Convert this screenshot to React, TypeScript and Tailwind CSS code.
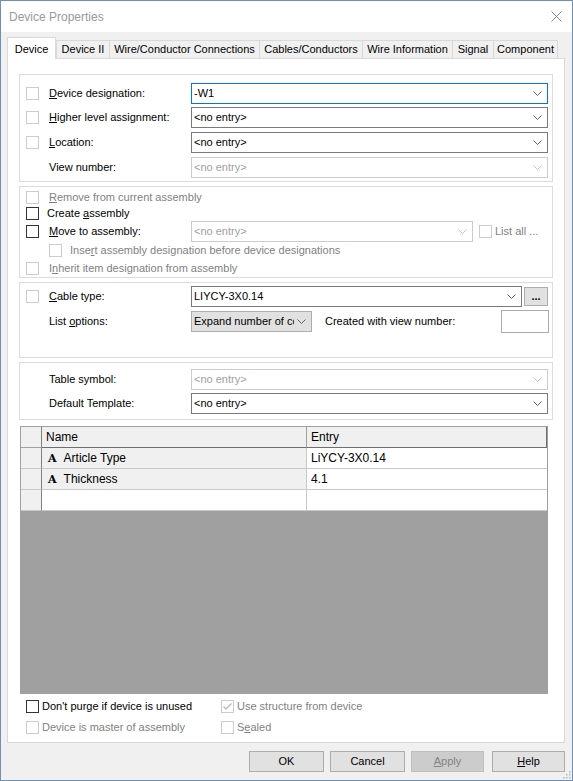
import React from "react";

type State = "normal" | "focus" | "disabled";

// label text with one underlined access key
function Acc({ text, at }: { text: string; at?: number }) {
  if (at === undefined) return <>{text}</>;
  return (
    <>
      {text.slice(0, at)}
      <u className="underline-offset-[1px]">{text[at]}</u>
      {text.slice(at + 1)}
    </>
  );
}

function Box({ disabled, checked }: { disabled?: boolean; checked?: boolean }) {
  return (
    <span
      className={`relative flex h-[13px] w-[13px] shrink-0 items-center justify-center border bg-white ${
        disabled ? "border-[#cccccc]" : "border-[#333333]"
      }`}
    >
      {checked && (
        <svg width="11" height="11" viewBox="0 0 11 11">
          <path d="M1.5 5.5 L4 8 L9.5 2.5" fill="none" stroke="#b4b4b4" strokeWidth="1.2" />
        </svg>
      )}
    </span>
  );
}

function Chevron({ disabled }: { disabled?: boolean }) {
  return (
    <svg width="9" height="5" viewBox="0 0 9 5" className="shrink-0">
      <path
        d="M0.5 0.5 L4.5 4.5 L8.5 0.5"
        fill="none"
        stroke={disabled ? "#c4c4c4" : "#5f5f5f"}
        strokeWidth="1"
      />
    </svg>
  );
}

function Combo({
  value,
  state = "normal",
  className = "",
}: {
  value: string;
  state?: State;
  className?: string;
}) {
  const border =
    state === "focus"
      ? "border-[#0078d7]"
      : state === "disabled"
        ? "border-[#cccccc]"
        : "border-[#7a7a7a]";
  return (
    <div
      className={`flex h-[21px] shrink-0 items-center border bg-white pl-[2px] pr-[5px] ${border} ${className}`}
    >
      <span
        className={`flex-1 overflow-hidden whitespace-nowrap ${
          state === "disabled" ? "text-[#a0a0a0]" : "text-black"
        }`}
      >
        {value}
      </span>
      <Chevron disabled={state === "disabled"} />
    </div>
  );
}

function Row({
  box,
  label,
  children,
  className = "",
  muted,
}: {
  box?: React.ReactNode;
  label: React.ReactNode;
  children?: React.ReactNode;
  className?: string;
  muted?: boolean;
}) {
  return (
    <div className={`flex items-center pl-[6px] ${className}`}>
      <span className="flex w-[13px] shrink-0">{box}</span>
      <span
        className={`ml-[10px] w-[142px] shrink-0 whitespace-nowrap ${
          muted ? "text-[#7f7f7f]" : "text-black"
        }`}
      >
        {label}
      </span>
      {children}
    </div>
  );
}

const tabs = [
  { name: "Device II", w: "w-[54px]" },
  { name: "Wire/Conductor Connections", w: "w-[151px]" },
  { name: "Cables/Conductors", w: "w-[104px]" },
  { name: "Wire Information", w: "w-[91px]" },
  { name: "Signal", w: "w-[42px]" },
  { name: "Component", w: "w-[65px]" },
];

function Button({
  label,
  w,
  disabled,
  className = "",
}: {
  label: React.ReactNode;
  w: string;
  disabled?: boolean;
  className?: string;
}) {
  return (
    <div
      className={`flex h-[21px] items-center justify-center border ${w} ${
        disabled
          ? "border-[#bfbfbf] bg-[#cccccc] text-[#838383]"
          : "border-[#adadad] bg-[#e1e1e1] text-black"
      } ${className}`}
    >
      {label}
    </div>
  );
}

function PropRow({
  name,
  entry,
  gray = true,
}: {
  name?: string;
  entry?: string;
  gray?: boolean;
}) {
  return (
    <div className="flex h-[21px]">
      <div className="w-[21px] border-b border-r border-b-[#c8c8c8] border-r-[#808080] bg-[#f0f0f0]" />
      <div
        className={`flex w-[265px] items-center gap-[7px] border-b border-r border-[#c8c8c8] pl-[6px] ${
          gray ? "bg-[#f0f0f0]" : "bg-white"
        }`}
      >
        {name && (
          <>
            <span className="font-['DejaVu_Serif',serif] text-[11px] font-bold leading-none">A</span>
            <span>{name}</span>
          </>
        )}
      </div>
      <div className="flex w-[240px] items-center border-b border-[#c8c8c8] bg-white pl-[4px]">
        {entry}
      </div>
    </div>
  );
}

export default function App() {
  return (
    <div className="relative flex h-[781px] w-[573px] flex-col overflow-hidden border border-[#6f8fb5] bg-[#f0f0f0] font-['Liberation_Sans',Arial,sans-serif] text-[11px] text-black">
      {/* title bar */}
      <div className="flex h-[31px] shrink-0 items-center justify-between bg-white pl-[8px] pr-[10px]">
        <span className="text-[12px] text-[#999999]">Device Properties</span>
        <svg width="11" height="11" viewBox="0 0 11 11">
          <path d="M0.5 0.5 L10.5 10.5 M10.5 0.5 L0.5 10.5" stroke="#8a8a8a" strokeWidth="1" />
        </svg>
      </div>

      {/* tabs */}
      <div className="flex h-[26px] shrink-0 items-end pl-[6px]">
        <div className="relative z-10 -mb-px flex h-[22px] w-[49px] items-start justify-center border border-b-0 border-[#d9d9d9] bg-white pt-[3px]">
          Device
        </div>
        {tabs.map((t, i) => (
          <div
            key={t.name}
            className={`flex h-[18px] items-center justify-center border border-b-0 border-[#d9d9d9] bg-[#f0f0f0] ${t.w} ${
              i === 0 ? "" : "-ml-px"
            }`}
          >
            {t.name}
          </div>
        ))}
      </div>

      {/* panel */}
      <div className="ml-[6px] flex h-[685px] w-[558px] shrink-0 flex-col border border-[#d9d9d9] bg-white px-[11px] pt-[15px]">
        <div className="h-[108px] shrink-0 border border-[#dcdcdc] pt-[8px]">
          <Row className="h-[21px]" box={<Box disabled />} label={<Acc text="Device designation:" at={0} />}>
            <Combo value="-W1" state="focus" className="w-[357px]" />
          </Row>
          <Row className="mt-[3px] h-[21px]" box={<Box disabled />} label={<Acc text="Higher level assignment:" at={0} />}>
            <Combo value="<no entry>" className="w-[357px]" />
          </Row>
          <Row className="mt-[4px] h-[21px]" box={<Box disabled />} label={<Acc text="Location:" at={0} />}>
            <Combo value="<no entry>" className="w-[357px]" />
          </Row>
          <Row className="mt-[4px] h-[21px]" label="View number:">
            <Combo value="<no entry>" state="disabled" className="w-[357px]" />
          </Row>
        </div>

        <div className="mt-[4px] h-[92px] shrink-0 border border-[#dcdcdc] pt-[2px]">
          <div className="flex h-[16px] items-center pl-[6px]">
            <Box disabled />
            <span className="ml-[10px] whitespace-nowrap text-[#7f7f7f]">
              <Acc text="Remove from current assembly" at={0} />
            </span>
          </div>
          <div className="flex h-[16px] items-center pl-[6px]">
            <Box />
            <span className="ml-[8px] whitespace-nowrap">
              <Acc text="Create assembly" at={7} />
            </span>
          </div>
          <Row className="h-[21px]" box={<Box />} label={<Acc text="Move to assembly:" at={0} />}>
            <Combo value="<no entry>" state="disabled" className="w-[282px]" />
            <span className="ml-[6px]">
              <Box disabled />
            </span>
            <span className="ml-[3px] whitespace-nowrap text-[#7f7f7f]">List all ...</span>
          </Row>
          <div className="flex h-[16px] items-center pl-[29px]">
            <Box disabled />
            <span className="ml-[8px] whitespace-nowrap text-[#7f7f7f]">
              <Acc text="Insert assembly designation before device designations" at={4} />
            </span>
          </div>
          <div className="mt-[2px] flex h-[16px] items-center pl-[6px]">
            <Box disabled />
            <span className="ml-[10px] whitespace-nowrap text-[#7f7f7f]">
              <Acc text="Inherit item designation from assembly" at={1} />
            </span>
          </div>
        </div>

        <div className="mt-[4px] h-[76px] shrink-0 border border-[#dcdcdc] pt-[3px]">
          <Row className="h-[21px]" box={<Box disabled />} label={<Acc text="Cable type:" at={0} />}>
            <Combo value="LIYCY-3X0.14" className="w-[331px]" />
            <div className="ml-[2px] flex h-[19px] w-[24px] items-end justify-center border border-[#adadad] bg-[#e1e1e1] pb-[3px] text-[11px] font-bold leading-none">
              ...
            </div>
          </Row>
          <Row className="mt-[3px] h-[23px]" label={<Acc text="List options:" at={5} />}>
            <div className="flex h-[21px] w-[121px] items-center border border-[#adadad] bg-[#e1e1e1] pl-[2px] pr-[5px]">
              <span className="flex-1 overflow-hidden whitespace-nowrap">Expand number of cores</span>
              <span className="ml-[3px] flex">
                <Chevron />
              </span>
            </div>
            <span className="ml-[13px] whitespace-nowrap">Created with view number:</span>
            <div className="ml-auto mr-[3px] h-[23px] w-[48px] border border-[#ababab] bg-white" />
          </Row>
        </div>

        <div className="mt-[4px] h-[58px] shrink-0 border border-[#dcdcdc] pt-[6px]">
          <Row className="h-[21px]" label="Table symbol:">
            <Combo value="<no entry>" state="disabled" className="w-[357px]" />
          </Row>
          <Row className="mt-[3px] h-[21px]" label="Default Template:">
            <Combo value="<no entry>" className="w-[357px]" />
          </Row>
        </div>

        {/* property grid */}
        <div className="ml-[1px] mt-[6px] flex h-[268px] w-[528px] shrink-0 flex-col border border-[#a0a0a0] bg-[#a0a0a0] text-[12px]">
          <div className="flex h-[21px] bg-[#f0f0f0]">
            <div className="w-[21px] border-b border-r border-b-[#a0a0a0] border-r-[#808080]" />
            <div className="flex w-[265px] items-center border-b border-r border-b-[#6e6e6e] border-r-[#a0a0a0] pl-[4px]">
              Name
            </div>
            <div className="flex w-[240px] items-center border-b border-r border-[#6e6e6e] pl-[4px]">
              Entry
            </div>
          </div>
          <PropRow name="Article Type" entry="LiYCY-3X0.14" />
          <PropRow name="Thickness" entry="4.1" />
          <PropRow gray={false} />
          <div className="flex-1 bg-[#a0a0a0]" />
        </div>

        <div className="mt-[2px] flex h-[21px] items-center pl-[7px]">
          <div className="flex w-[195px] items-center">
            <Box />
            <span className="ml-[3px] whitespace-nowrap">Don't purge if device is unused</span>
          </div>
          <Box disabled checked />
          <span className="ml-[3px] whitespace-nowrap text-[#7f7f7f]">Use structure from device</span>
        </div>
        <div className="flex h-[21px] items-center pl-[7px]">
          <div className="flex w-[195px] items-center">
            <Box disabled />
            <span className="ml-[3px] whitespace-nowrap text-[#7f7f7f]">Device is master of assembly</span>
          </div>
          <Box disabled />
          <span className="ml-[3px] whitespace-nowrap text-[#7f7f7f]">
            <Acc text="Sealed" at={1} />
          </span>
        </div>
      </div>

      {/* dialog buttons */}
      <div className="mt-[8px] flex h-[21px] shrink-0 pl-[248px]">
        <Button label="OK" w="w-[75px]" />
        <Button label="Cancel" w="w-[75px]" className="ml-[6px]" />
        <Button label={<Acc text="Apply" at={0} />} w="w-[73px]" disabled className="ml-[6px]" />
        <Button label={<Acc text="Help" at={0} />} w="w-[73px]" className="ml-[8px]" />
      </div>

      {/* size grip */}
      <svg className="absolute bottom-[1px] right-[1px]" width="10" height="10" viewBox="0 0 10 10">
        {[
          [8, 2],
          [8, 5],
          [5, 5],
          [8, 8],
          [5, 8],
          [2, 8],
        ].map(([x, y]) => (
          <rect key={`${x}-${y}`} x={x} y={y} width="1.5" height="1.5" fill="#b8b8b8" />
        ))}
      </svg>
    </div>
  );
}
